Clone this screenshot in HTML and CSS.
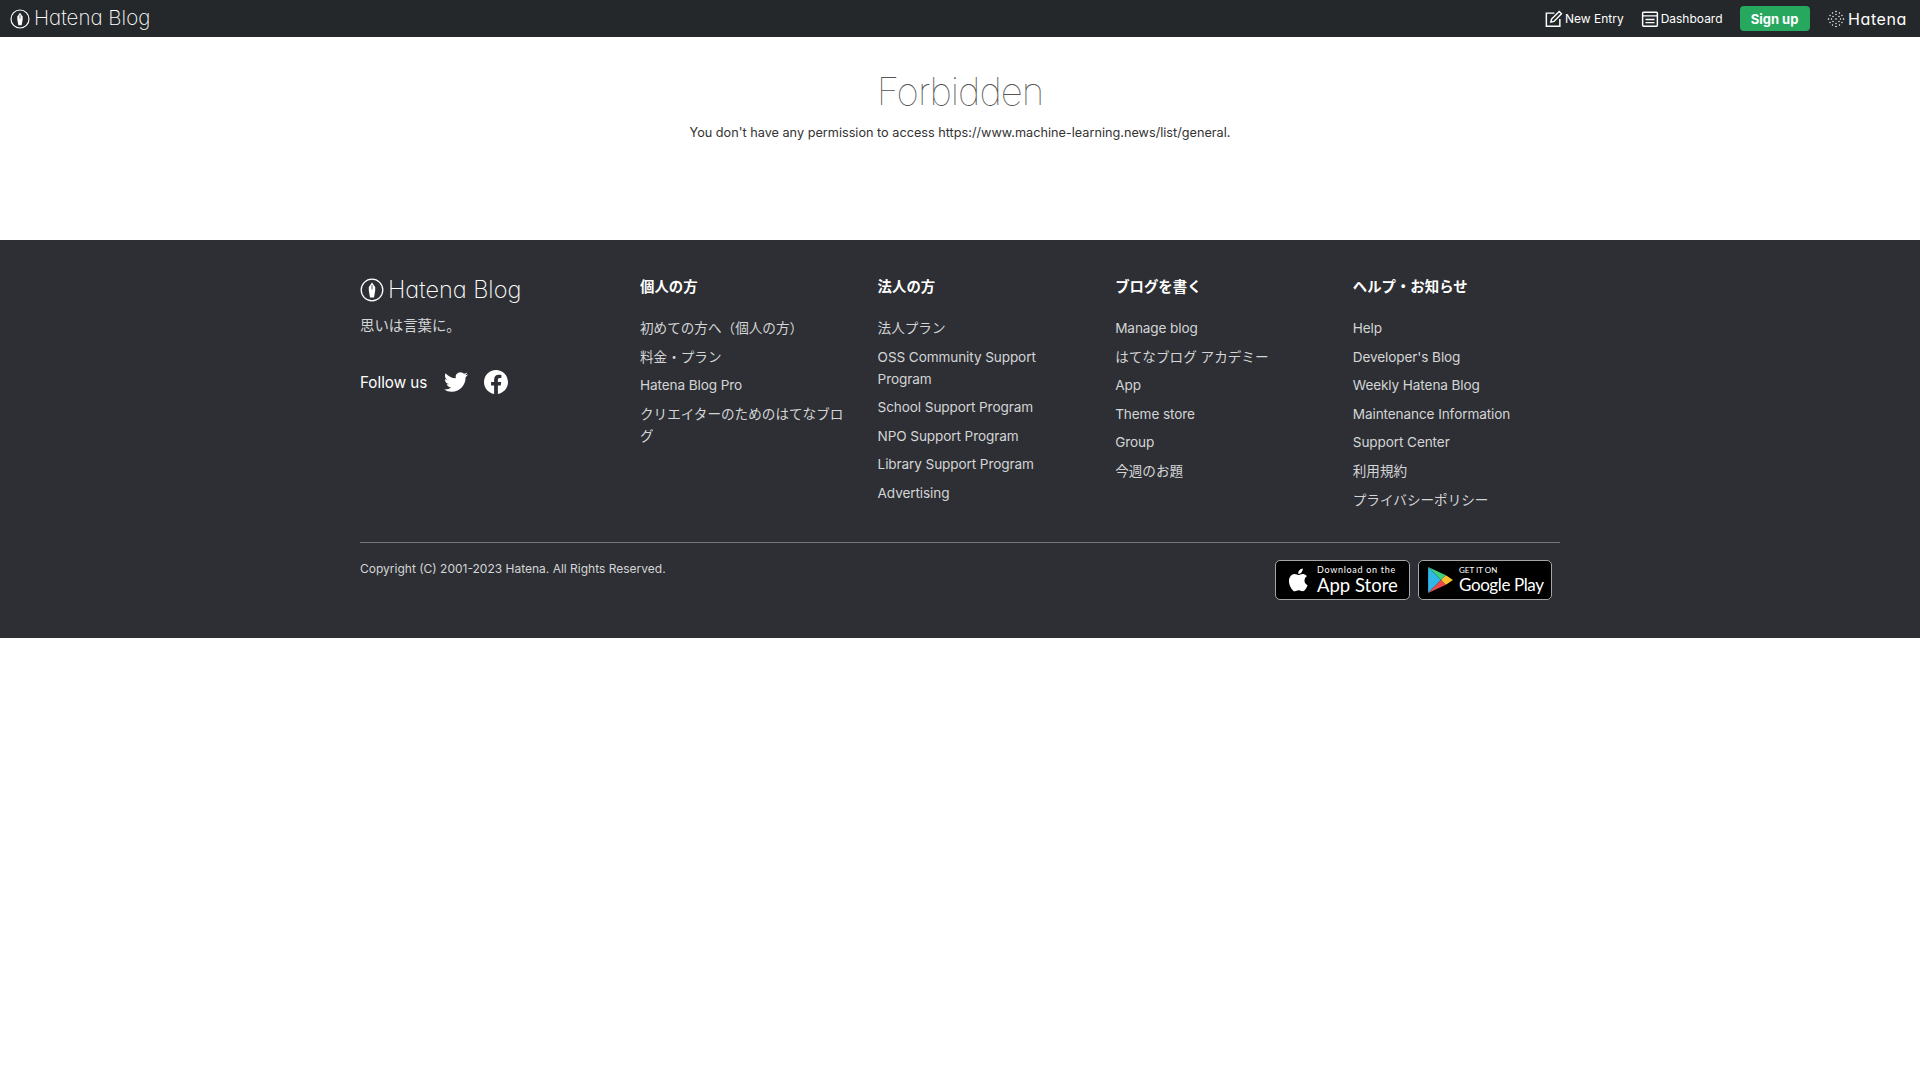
FILE: index.html
```html
<!DOCTYPE html>
<html lang="ja">
<head>
<meta charset="utf-8">
<title>Forbidden</title>
<link rel="stylesheet" href="styles.css">
</head>
<body>
<header class="topbar">
  <a class="brand">
    <svg class="nib" viewBox="0 0 24 24"><circle cx="12" cy="12" r="10.8" fill="none" stroke="currentColor" stroke-width="1.4"/><path d="M12 4.500l3.200 4.500v3.500l-1.200 7h-4l-1.200-7V9z" fill="currentColor"/><path class="slit" d="M12 7v4.500"/></svg>
    <span class="brand-text">Hatena Blog</span>
  </a>
  <nav class="topnav">
    <a class="navlink">
      <svg class="navicon" viewBox="0 0 20 20" fill="none" stroke="currentColor" stroke-width="1.600"><path d="M16.500 10v8h-15V3.500h9"/><path d="M6.500 13.500l.8-3.500L15.800 1.700 18.300 4.200 10 12.700z"/></svg>
      New Entry
    </a>
    <a class="navlink navlink-dash">
      <svg class="navicon" viewBox="0 0 20 20" fill="none" stroke="currentColor" stroke-width="1.600"><rect x="1.800" y="2.500" width="16.400" height="15.500" rx="1"/><path d="M1.800 6.500h16.400M5 10.500h10M5 14h10"/></svg>
      Dashboard
    </a>
    <a class="signup">Sign up</a>
    <a class="hatena">
      <svg class="dots" viewBox="0 0 18 18" fill="#fff"><circle cx="9" cy="1.500" r=".8"/><circle cx="5.500" cy="3" r=".7"/><circle cx="12.500" cy="3" r=".7"/><circle cx="9" cy="4.500" r=".7"/><circle cx="3" cy="5.500" r=".7"/><circle cx="15" cy="5.500" r=".7"/><circle cx="6" cy="6.500" r=".7"/><circle cx="12" cy="6.500" r=".7"/><circle cx="1.500" cy="9" r=".8"/><circle cx="4.500" cy="9" r=".7"/><circle cx="9" cy="9" r=".8"/><circle cx="13.500" cy="9" r=".7"/><circle cx="16.500" cy="9" r=".8"/><circle cx="6" cy="11.500" r=".7"/><circle cx="12" cy="11.500" r=".7"/><circle cx="3" cy="12.500" r=".7"/><circle cx="15" cy="12.500" r=".7"/><circle cx="9" cy="13.500" r=".7"/><circle cx="5.500" cy="15" r=".7"/><circle cx="12.500" cy="15" r=".7"/><circle cx="9" cy="16.500" r=".8"/></svg>
      <span>Hatena</span>
    </a>
  </nav>
</header>

<main class="error">
  <h1>Forbidden</h1>
  <p>You don't have any permission to access https://www.machine-learning.news/list/general.</p>
</main>

<footer class="footer">
  <div class="footer-inner">
    <div class="footer-top">
      <div class="about">
        <a class="brand brand-lg">
          <svg class="nib" viewBox="0 0 24 24"><circle cx="12" cy="12" r="10.8" fill="none" stroke="currentColor" stroke-width="1.300"/><path d="M12 4.500l3.200 4.500v3.500l-1.200 7h-4l-1.200-7V9z" fill="currentColor"/><path class="slit slit-lg" d="M12 7v4.500"/></svg>
          <span class="brand-text">Hatena Blog</span>
        </a>
        <p class="tagline">思いは言葉に。</p>
        <div class="follow">
          <span>Follow us</span>
          <svg class="social" viewBox="0 0 24 24" fill="#fff"><path d="M23.950 4.570a10 10 0 0 1-2.820.770 4.960 4.960 0 0 0 2.160-2.720c-.950.550-2 .96-3.130 1.200a4.920 4.920 0 0 0-8.380 4.480C7.690 8.100 4.070 6.130 1.640 3.160a4.820 4.820 0 0 0-.67 2.480c0 1.710.87 3.210 2.190 4.100a4.900 4.900 0 0 1-2.230-.620v.060a4.920 4.920 0 0 0 3.950 4.830 5 5 0 0 1-2.210.080 4.940 4.940 0 0 0 4.600 3.420A9.870 9.870 0 0 1 0 19.540a14 14 0 0 0 7.560 2.210c9.050 0 14-7.500 14-13.980 0-.21 0-.42-.02-.63a9.940 9.940 0 0 0 2.460-2.550z"/></svg>
          <svg class="social" viewBox="0 0 24 24" fill="#fff"><path d="M24 12.070C24 5.400 18.630 0 12 0S0 5.400 0 12.070C0 18.100 4.390 23.100 10.130 24v-8.440H7.080v-3.490h3.050V9.410c0-3.020 1.790-4.690 4.530-4.690 1.310 0 2.680.240 2.680.240v2.970h-1.510c-1.490 0-1.960.93-1.960 1.890v2.250h3.330l-.53 3.490h-2.800V24C19.610 23.100 24 18.100 24 12.070z"/></svg>
        </div>
      </div>
      <div class="cols">
        <section class="col">
          <h2>個人の方</h2>
          <ul>
            <li>初めての方へ（個人の方）</li>
            <li>料金・プラン</li>
            <li class="en">Hatena Blog Pro</li>
            <li>クリエイターのためのはてなブログ</li>
          </ul>
        </section>
        <section class="col">
          <h2>法人の方</h2>
          <ul>
            <li>法人プラン</li>
            <li class="en">OSS Community Support Program</li>
            <li class="en">School Support Program</li>
            <li class="en">NPO Support Program</li>
            <li class="en">Library Support Program</li>
            <li class="en">Advertising</li>
          </ul>
        </section>
        <section class="col">
          <h2>ブログを書く</h2>
          <ul>
            <li class="en">Manage blog</li>
            <li>はてなブログ アカデミー</li>
            <li class="en">App</li>
            <li class="en">Theme store</li>
            <li class="en">Group</li>
            <li>今週のお題</li>
          </ul>
        </section>
        <section class="col">
          <h2>ヘルプ・お知らせ</h2>
          <ul>
            <li class="en">Help</li>
            <li class="en">Developer's Blog</li>
            <li class="en">Weekly Hatena Blog</li>
            <li class="en">Maintenance Information</li>
            <li class="en">Support Center</li>
            <li>利用規約</li>
            <li>プライバシーポリシー</li>
          </ul>
        </section>
      </div>
    </div>
    <div class="footer-bottom">
      <p class="copyright">Copyright (C) 2001-2023 Hatena. All Rights Reserved.</p>
      <div class="badges">
        <a class="badge badge-apple">
          <svg class="apple" viewBox="0 0 24 24" fill="#fff"><path d="M17.050 12.540c-.030-2.650 2.160-3.930 2.260-3.990-1.240-1.800-3.160-2.050-3.840-2.080-1.630-.170-3.190.960-4.020.960-.830 0-2.110-.940-3.470-.910-1.780.030-3.430 1.040-4.350 2.630-1.860 3.220-.480 7.980 1.330 10.600.890 1.280 1.940 2.720 3.330 2.670 1.340-.050 1.840-.860 3.460-.860 1.610 0 2.070.860 3.480.840 1.440-.030 2.350-1.300 3.230-2.590 1.020-1.490 1.440-2.930 1.460-3-.030-.010-2.800-1.070-2.870-4.270zM14.400 4.760c.740-.890 1.230-2.130 1.100-3.360-1.060.040-2.340.700-3.100 1.590-.680.790-1.280 2.050-1.120 3.260 1.180.090 2.380-.600 3.120-1.490z"/></svg>
          <span class="badge-text">
            <span class="badge-small">Download on the</span>
            <span class="badge-big">App Store</span>
          </span>
        </a>
        <a class="badge badge-google">
          <svg class="play" viewBox="0 0 24 26"><path d="M1 1v24l12-12z" fill="#31b7e8"/><path d="M1 1l12 12 4.500-4.500z" fill="#3ed07e"/><path d="M1 25l12-12 4.500 4.500z" fill="#ee4a4a"/><path d="M17.500 8.500L13 13l4.500 4.500L24 13z" fill="#fbc02d"/></svg>
          <span class="badge-text">
            <span class="badge-tiny">GET IT ON</span>
            <span class="badge-big badge-play">Google Play</span>
          </span>
        </a>
      </div>
    </div>
  </div>
</footer>
</body>
</html>
```

FILE: styles.css
```css
* { box-sizing: border-box; }
html, body { margin: 0; padding: 0; }
body {
  background: #fff;
  color: #303030;
  font-family: Inter, "Noto Sans CJK JP", sans-serif;
  font-size: 14px;
}
h1, h2, p, ul { margin: 0; padding: 0; }
ul { list-style: none; }

.topbar {
  height: 37px;
  background: #25282b;
  color: #fff;
  display: flex;
  align-items: center;
  justify-content: space-between;
  padding: 0 13px 0 10px;
}
.brand { display: flex; align-items: center; gap: 4px; color: #fff; }
.brand .nib { width: 20px; height: 20px; }
.slit { stroke: #25282b; stroke-width: .8; fill: none; }
.slit-lg { stroke: #2d2f34; }
.brand-text {
  font-family: Inter, sans-serif;
  font-feature-settings: "cv11";
  font-weight: 200;
  font-size: 20.500px;
  line-height: 1;
}
.topnav { display: flex; align-items: center; }
.navlink {
  display: flex;
  align-items: center;
  gap: 2px;
  font-size: 12px;
  color: #fff;
}
.navicon { width: 18px; height: 18px; }
.navlink-dash { margin-left: 17px; }
.signup {
  margin-left: 17px;
  width: 70px;
  height: 25px;
  background: #27a85f;
  border-radius: 4px;
  color: #fff;
  font-weight: 700;
  font-size: 13px;
  display: flex;
  align-items: center;
  justify-content: center;
}
.hatena {
  margin-left: 17px;
  display: flex;
  align-items: center;
  gap: 3.500px;
  font-family: Inter, sans-serif;
  font-feature-settings: "cv11";
  font-weight: 400;
  font-size: 16px;
  letter-spacing: .6px;
}
.dots { width: 18px; height: 18px; }

.error {
  height: 203px;
  text-align: center;
}
.error h1 {
  padding-top: 30px;
  font-size: 38.500px;
  line-height: 48px;
  font-weight: 100;
  letter-spacing: -1px;
  color: #555;
}
.error p {
  margin-top: 8px;
  font-size: 12.700px;
  line-height: 20px;
  color: #333;
}

.footer {
  height: 398px;
  background: #2d2f34;
  color: #d4d5d6;
}
.footer-inner { width: 1200px; margin: 0 auto; padding-top: 36px; }
.footer-top { display: flex; height: 267px; border-bottom: 1px solid #75777a; }
.about { width: 280px; flex: none; padding-top: 1.500px; }
.brand-lg .nib { width: 24px; height: 24px; }
.brand-lg .brand-text { font-size: 23.500px; }
.tagline { margin-top: 13.500px; line-height: 22px; font-size: 14.400px; }
.follow {
  margin-top: 33px;
  display: flex;
  align-items: center;
  color: #fff;
  font-size: 15.200px;
  font-weight: 400;
}
.social { width: 24px; height: 24px; margin-left: 16px; }
.follow span + .social { margin-left: 17px; }
.cols { flex: 1; display: grid; grid-template-columns: repeat(4, 207.600px); column-gap: 30px; }
.col h2 { font-size: 14.400px; line-height: 22px; font-weight: 700; color: #fff; margin-bottom: 19px; }
.col li { font-size: 13.600px; line-height: 22px; margin-bottom: 6.600px; }
.col li.en { letter-spacing: -.11px; }

.footer-bottom { display: flex; justify-content: space-between; align-items: flex-start; padding-top: 17px; }
.copyright { font-size: 12px; line-height: 18px; }
.badges { display: flex; gap: 8px; margin-right: 8px; }
.badge {
  height: 40px;
  background: #000;
  border: 1px solid #a6a6a6;
  border-radius: 5px;
  color: #fff;
  display: flex;
  align-items: center;
}
.badge-apple { width: 135px; padding-left: 10px; gap: 5px; }
.badge-google { width: 134px; padding-left: 8px; gap: 6px; }
.apple { width: 26px; height: 26px; }
.play { width: 26px; height: 28px; }
.badge-text { display: flex; flex-direction: column; font-family: Lato, sans-serif; white-space: nowrap; }
.badge-small { font-size: 9px; line-height: 10px; letter-spacing: .7px; }
.badge-tiny { font-size: 8px; line-height: 9px; }
.badge-big { font-size: 18.500px; line-height: 20px; }
.badge-play { font-size: 17px; letter-spacing: -.4px; }
```
